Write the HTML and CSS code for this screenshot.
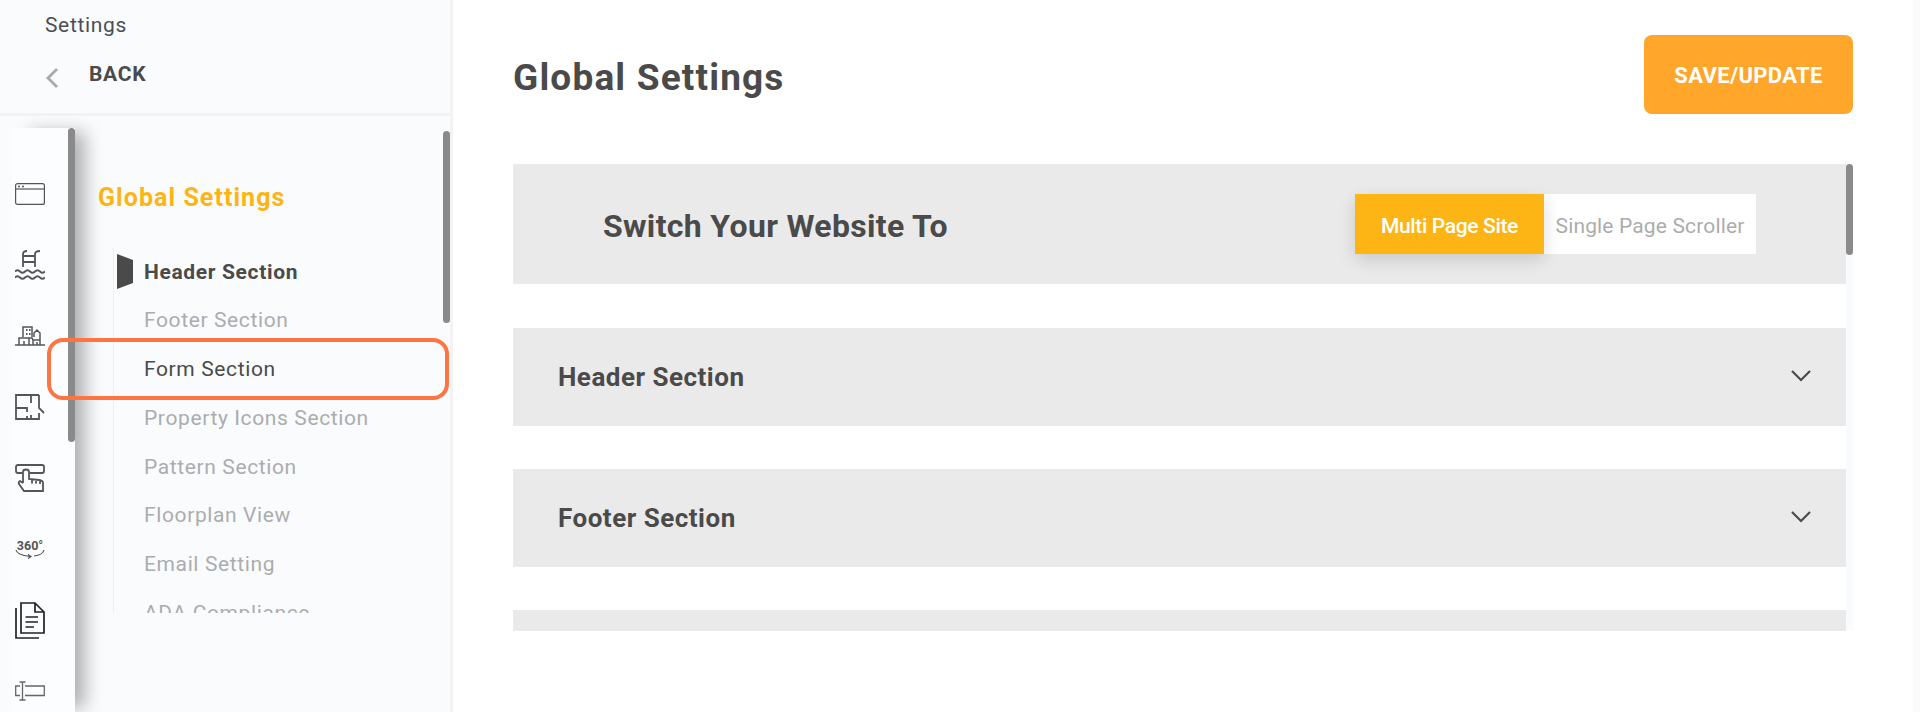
FILE: index.html
```html
<!DOCTYPE html>
<html lang="en">
<head>
<meta charset="utf-8">
<title>Global Settings</title>
<link rel="stylesheet" href="styles.css">
</head>
<body>
<div class="app">
  <aside class="sidebar">
    <header class="side-head">
      <div class="crumb">Settings</div>
      <div class="back">
        <svg class="back-icon" width="14" height="22" viewBox="0 0 14 22"><path d="M12 2 3 11l9 9" fill="none" stroke="#a9a9a9" stroke-width="2.800"/></svg>
        <span class="back-label">BACK</span>
      </div>
    </header>
    <div class="side-body">
      <nav class="rail">
        <div class="rail-icons">
          <div class="rail-slot"><svg width="30" height="22" viewBox="0 0 30 22"><g fill="none" stroke="#555" stroke-width="1.2"><rect x=".6" y=".6" width="28.8" height="20.8" rx="2"/><path d="M.6 6h28.8"/></g><circle cx="4" cy="3.4" r="1" fill="#555"/><circle cx="8" cy="3.4" r="1" fill="#555"/></svg></div>
          <div class="rail-slot"><svg width="30" height="30" viewBox="0 0 30 30"><g fill="none" stroke="#555" stroke-width="1.800"><path d="M8 17V4q0-3 4-3M20 17V4q0-3 5-3M8 6h12M8 12h12"/><path d="M0 21.500q2.500-2.500 5 0t5 0 5 0 5 0 5 0 5 0M0 27.500q2.500-2.500 5 0t5 0 5 0 5 0 5 0 5 0"/></g></svg></div>
          <div class="rail-slot"><svg width="30" height="20" viewBox="0 0 30 20"><g fill="none" stroke="#555" stroke-width="1.500"><path d="M0 19h30M8 11V1h9v10"/><path d="M4 19v-7h10v7M9 19v-4M14 12h3l1 2v5M18 14h7v5M19 11V7l3-3 3 3v12M22 16v3"/></g><path d="M11 3h1.500v2H11zM14 3h1.500v2H14zM11 7h1.500v2H11zM14 7h1.500v2H14z" fill="#555"/></svg></div>
          <div class="rail-slot"><svg width="30" height="26" viewBox="0 0 30 26"><path d="M16 9V1H1v24h23v-6M24 1H16M24 1v13l5 5M1 14h11v4M12 22v3M16 21v4" fill="none" stroke="#555" stroke-width="1.800"/></svg></div>
          <div class="rail-slot"><svg width="30" height="28" viewBox="0 0 30 28"><path d="M7 9H3q-2 0-2-2V3q0-2 2-2h24q2 0 2 2v4q0 2-2 2H15" fill="none" stroke="#555" stroke-width="1.800"/><path d="M8 19V8q0-2.500 3-2.500T14 8v7l10 1q4 .5 4 3v8H9l-5-7q-.8-2 1-3l3 2M17 15.500v4M21 16v3.500M25 17v3" fill="none" stroke="#555" stroke-width="1.800"/></svg></div>
          <div class="rail-slot"><svg width="30" height="22" viewBox="0 0 30 22"><text x="15" y="12" class="deg" text-anchor="middle">360°</text><path d="M1 12q1 5 14 6.500M29 12q-1 5-10 6M13 16.500l3 2-3 2" fill="none" stroke="#555" stroke-width="1.200"/></svg></div>
          <div class="rail-slot"><svg width="30" height="37" viewBox="0 0 30 37"><g fill="none" stroke="#222" stroke-width="1.700"><path d="M6 1h14l9 9v21H6zM20 1v9h9"/><path d="M1 6v30h23"/><path d="M10.500 15H23M10.500 20H23M10.500 25H19"/></g></svg></div>
          <div class="rail-slot"><svg width="30" height="20" viewBox="0 0 30 20"><g fill="none" stroke="#666" stroke-width="1.300"><path d="M5 5H.7v9.500H5M10 5h19.300v9.500H10"/><path d="M7.500 1v18M4.500 1h6M4.500 19h6"/></g></svg></div>
        </div>
        <div class="rail-thumb"></div>
      </nav>
      <div class="menu-pane">
        <div class="menu-col">
          <h2 class="menu-title">Global Settings</h2>
          <ul class="menu-list">
            <li class="menu-item is-active"><svg class="marker" width="16" height="35" viewBox="0 0 16 35"><path d="M0 0l16 6v23L0 35z" fill="#4a4a4a"/></svg>Header Section</li>
            <li class="menu-item">Footer Section</li>
            <li class="menu-item is-current">Form Section</li>
            <li class="menu-item">Property Icons Section</li>
            <li class="menu-item">Pattern Section</li>
            <li class="menu-item">Floorplan View</li>
            <li class="menu-item">Email Setting</li>
            <li class="menu-item">ADA Compliance</li>
          </ul>
        </div>
        <div class="menu-thumb"></div>
      </div>
    </div>
    <div class="highlight"></div>
  </aside>
  <main class="main">
    <header class="main-head">
      <h1 class="page-title">Global Settings</h1>
      <button class="save" type="button">SAVE/UPDATE</button>
    </header>
    <div class="scroller">
      <div class="panels">
        <section class="band band-switch">
          <h3 class="switch-title">Switch Your Website To</h3>
          <div class="toggle">
            <span class="toggle-on">Multi Page Site</span>
            <span class="toggle-off">Single Page Scroller</span>
          </div>
        </section>
        <section class="band band-acc">
          <h3 class="acc-title">Header Section</h3>
          <svg class="chev" width="20" height="12" viewBox="0 0 20 12"><path d="M1 1l9 9 9-9" fill="none" stroke="#4a4a4a" stroke-width="2.200"/></svg>
        </section>
        <section class="band band-acc">
          <h3 class="acc-title">Footer Section</h3>
          <svg class="chev" width="20" height="12" viewBox="0 0 20 12"><path d="M1 1l9 9 9-9" fill="none" stroke="#4a4a4a" stroke-width="2.200"/></svg>
        </section>
        <section class="band band-acc"></section>
      </div>
      <div class="track"><div class="track-thumb"></div></div>
    </div>
  </main>
  <div class="page-track"></div>
</div>
</body>
</html>
```
FILE: styles.css
```css
* { box-sizing: border-box; }
html, body { margin: 0; padding: 0; height: 712px; overflow: hidden; background: #fff; }
body { font-family: Roboto, "Liberation Sans", sans-serif; color: #4a4a4a; }
h1, h2, h3, ul { margin: 0; padding: 0; }
ul { list-style: none; }

.app { display: flex; height: 712px; }

/* sidebar */
.sidebar { position: relative; width: 453px; flex: none; background: #fafbfd; border-right: 3px solid #f3f3f3; display: flex; flex-direction: column; }
.side-head { height: 116px; flex: none; border-bottom: 3px solid #f3f3f3; padding: 12px 0 0 45px; }
.crumb { font-size: 21px; line-height: 26px; color: #4a4f57; letter-spacing: .65px; }
.back { display: flex; margin-top: 21px; }
.back-icon { margin-top: 8px; }
.back-label { margin-left: 30px; font-size: 21px; line-height: 30px; font-weight: 700; color: #4a4a4a; letter-spacing: .7px; }

.side-body { flex: 1; min-height: 0; display: flex; padding-top: 12px; }
.rail { position: relative; width: 63px; margin-left: 12px; flex: none; background: #fcfdfe; box-shadow: 14px 0 18px -4px rgba(0,0,0,.3); display: flex; z-index: 1; clip-path: inset(-20px -40px 0 0); }
.rail-icons { width: 56px; padding-top: 30.5px; }
.rail-slot { height: 71px; display: flex; align-items: center; padding-left: 3px; }
.rail-slot svg { display: block; }
.rail-thumb { width: 7px; height: 314px; background: #8a8a8a; border-radius: 4px; }
.deg { font-size: 12.5px; font-weight: 700; fill: #555; font-family: Roboto, sans-serif; }

.menu-pane { flex: 1; min-width: 0; display: flex; }
.menu-col { flex: 1; min-width: 0; }
.menu-title { margin: 53px 0 0 23px; font-size: 25px; line-height: 34px; font-weight: 700; color: #fdb515; letter-spacing: 1.050px; }
.menu-list { margin: 32px 0 0 38px; height: 366px; overflow: hidden; border-left: 1px solid #eeeff1; }
.menu-item { display: flex; align-items: center; height: 48.800px; padding-left: 30px; font-size: 21px; font-weight: 400; color: #aaadb0; white-space: nowrap; letter-spacing: .62px; }
.menu-item.is-active { font-weight: 700; color: #4a4a4a; padding-left: 3px; letter-spacing: .65px; padding-top: 1px; }
.menu-item.is-current { color: #4a4a4a; }
.marker { flex: none; margin-right: 11px; }
.menu-thumb { width: 7px; height: 192px; margin-top: 3px; background: #8a8a8a; border-radius: 4px; flex: none; }

.highlight { position: absolute; left: 47px; top: 338px; width: 402px; height: 62px; border: 4px solid #ff7443; border-radius: 16px; z-index: 2; pointer-events: none; }

/* main */
.main { flex: 1; min-width: 0; padding: 0 60px; display: flex; flex-direction: column; background: #fff; }
.main-head { height: 164px; flex: none; display: flex; justify-content: space-between; align-items: flex-start; padding-top: 35px; }
.page-title { font-size: 37px; line-height: 80px; font-weight: 700; color: #4a4a4a; letter-spacing: 1.170px; margin-top: 3px; }
.save { width: 209px; height: 79px; border: 0; border-radius: 8px; background: #ffa62b; color: #fff; font: 700 22px Roboto, sans-serif; letter-spacing: .35px; padding: 1px 0 0; }

.scroller { height: 467px; flex: none; display: flex; overflow: hidden; }
.panels { flex: 1; min-width: 0; }
.track { width: 7px; flex: none; background: #fafbfd; }
.track-thumb { height: 91px; background: #8a8a8a; border-radius: 4px; }

.band { display: flex; align-items: center; background: #eaeaea; }
.band-switch { height: 120px; padding-left: 90px; margin-bottom: 44px; }
.switch-title { font-size: 32px; font-weight: 700; color: #4a4a4a; width: 752px; flex: none; letter-spacing: .33px; padding-top: 4px; }
.toggle { display: flex; height: 60px; background: #fff; }
.toggle-on { width: 189px; padding-top: 4px; display: flex; align-items: center; justify-content: center; background: #fdb515; color: #fff; font-size: 21px; font-weight: 500; letter-spacing: -.35px; box-shadow: 0 6px 16px rgba(0,0,0,.14); }
.toggle-off { width: 212px; padding-top: 4px; display: flex; align-items: center; justify-content: center; color: #acacac; font-size: 21px; letter-spacing: .15px; }
.band-acc { height: 98px; padding: 0 35px 0 45px; margin-bottom: 43px; justify-content: space-between; }
.acc-title { font-size: 26px; font-weight: 700; color: #4a4a4a; letter-spacing: .5px; }
.chev { display: block; margin-top: -2px; }

.page-track { width: 7px; flex: none; background: #fafbfd; }
```
